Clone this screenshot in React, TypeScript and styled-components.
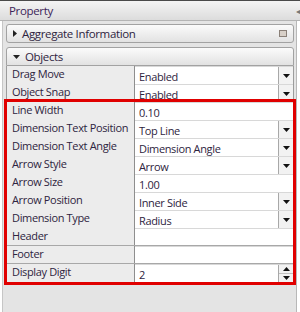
import styled, { createGlobalStyle } from "styled-components";

const GlobalStyle = createGlobalStyle`
  html, body {
    margin: 0;
    padding: 0;
    background: #ffffff;
  }
  body {
    font-family: "Open Sans", "Noto Sans", "Liberation Sans", sans-serif;
    font-size: 11px;
    letter-spacing: -0.35px;
    color: #2e2440;
  }
`;

interface Row {
  label: string;
  value: string;
  kind: "text" | "combo" | "spin";
}

const topRows: Row[] = [
  { label: "Drag Move", value: "Enabled", kind: "combo" },
  { label: "Object Snap", value: "Enabled", kind: "combo" },
];

const markedRows: Row[] = [
  { label: "Line Width", value: "0.10", kind: "text" },
  { label: "Dimension Text Position", value: "Top Line", kind: "combo" },
  { label: "Dimension Text Angle", value: "Dimension Angle", kind: "combo" },
  { label: "Arrow Style", value: "Arrow", kind: "combo" },
  { label: "Arrow Size", value: "1.00", kind: "text" },
  { label: "Arrow Position", value: "Inner Side", kind: "combo" },
  { label: "Dimension Type", value: "Radius", kind: "combo" },
  { label: "Header", value: "", kind: "text" },
  { label: "Footer", value: "", kind: "text" },
  { label: "Display Digit", value: "2", kind: "spin" },
];

const Caret = ({ up }: { up?: boolean }) => (
  <svg width="7" height="4" viewBox="0 0 7 4">
    <path d={up ? "M0 4 L3.5 0 L7 4 Z" : "M0 0 L7 0 L3.5 4 Z"} fill="#111" />
  </svg>
);

const PropRow = ({ row }: { row: Row }) => (
  <RowLine>
    <LabelCell>{row.label}</LabelCell>
    <ValueCell>
      <ValueText>{row.value}</ValueText>
      {row.kind === "combo" && (
        <DropButton>
          <Caret />
        </DropButton>
      )}
      {row.kind === "spin" && (
        <SpinButton>
          <SpinHalf>
            <Caret up />
          </SpinHalf>
          <SpinHalf>
            <Caret />
          </SpinHalf>
        </SpinButton>
      )}
    </ValueCell>
  </RowLine>
);

export default function App() {
  return (
    <>
      <GlobalStyle />
      <Window>
        <TitleBar>
          <span>Property</span>
          <Collapse>◂◂</Collapse>
        </TitleBar>
        <Body>
          <GroupHeader>
            <svg width="4" height="7" viewBox="0 0 4 7">
              <path d="M0 0 L4 3.5 L0 7 Z" fill="#222" />
            </svg>
            <GroupTitle>Aggregate Information</GroupTitle>
            <PinIcon />
          </GroupHeader>
          <Section>
            <GroupHeader $open>
              <svg width="7" height="4" viewBox="0 0 7 4">
                <path d="M0 0 L7 0 L3.5 4 Z" fill="#222" />
              </svg>
              <GroupTitle>Objects</GroupTitle>
            </GroupHeader>
            <Table>
              {topRows.map((r) => (
                <PropRow key={r.label} row={r} />
              ))}
              <Marked>
                {markedRows.map((r) => (
                  <PropRow key={r.label} row={r} />
                ))}
              </Marked>
            </Table>
          </Section>
        </Body>
      </Window>
    </>
  );
}

const Window = styled.div`
  width: 300px;
  height: 312px;
  box-sizing: border-box;
  border-top: 1px solid #4a4a4a;
  display: flex;
  flex-direction: column;
  background: #ffffff;
  overflow: hidden;
`;

const TitleBar = styled.div`
  height: 19px;
  display: flex;
  align-items: center;
  justify-content: space-between;
  padding: 0 2px 0 9px;
  background: linear-gradient(#f4f4f4, #dcdcdc);
  border-bottom: 1px solid #b4b4b4;
  color: #3c2458;
  font-size: 11.5px;
`;

const Collapse = styled.span`
  font-size: 8px;
  color: #777;
  letter-spacing: -3px;
`;

const Body = styled.div`
  flex: 1;
  margin: 0 3px 0 2px;
  padding: 3px 2px 0 3px;
  background: #e4e4e4;
  border-left: 1px solid #c6c6c6;
  border-right: 1px solid #b8b8b8;
  display: flex;
  flex-direction: column;
  gap: 4px;
`;

const Section = styled.div`
  display: flex;
  flex-direction: column;
`;

const GroupHeader = styled.div<{ $open?: boolean }>`
  height: 17px;
  display: flex;
  align-items: center;
  gap: 5px;
  padding: 0 6px;
  background: linear-gradient(#fbfbfb, #e2e2e2);
  border: 1px solid #a2a2a2;
  border-radius: ${(p) => (p.$open ? "3px 3px 0 0" : "3px")};
  color: #2e2440;
`;

const GroupTitle = styled.span`
  flex: 1;
  font-size: 11.5px;
`;

const PinIcon = styled.span`
  width: 6px;
  height: 5px;
  border: 1px solid #8a8078;
  background: #d8d0c8;
`;

const Table = styled.div`
  display: flex;
  flex-direction: column;
  border-left: 1px solid #9c9c9c;
  border-right: 1px solid #9c9c9c;
`;

const Marked = styled.div`
  display: flex;
  flex-direction: column;
  outline: 3px solid #e00000;
  outline-offset: 0px;
  margin-bottom: 2px;
`;

const RowLine = styled.div`
  height: 18px;
  display: grid;
  grid-template-columns: 128px 1fr;
  border-bottom: 1px solid #a8a8a8;
  box-sizing: border-box;
`;

const LabelCell = styled.div`
  background: #ececec;
  border-right: 1px solid #8e8e8e;
  padding: 0 0 0 5px;
  line-height: 15px;
  white-space: nowrap;
  overflow: hidden;
`;

const ValueCell = styled.div`
  background: #ffffff;
  display: flex;
  align-items: stretch;
  border-top: 1px solid #d8d8d8;
`;

const ValueText = styled.div`
  flex: 1;
  padding: 2px 0 0 4px;
  line-height: 15px;
  white-space: nowrap;
`;

const DropButton = styled.div`
  width: 14px;
  display: flex;
  align-items: center;
  justify-content: center;
  border-left: 1px solid #a8a8a8;
  background: #f2f2f2;
`;

const SpinButton = styled.div`
  width: 14px;
  display: flex;
  flex-direction: column;
  border-left: 1px solid #a8a8a8;
  background: #f2f2f2;
`;

const SpinHalf = styled.div`
  flex: 1;
  display: flex;
  align-items: center;
  justify-content: center;
  & + & {
    border-top: 1px solid #c0c0c0;
  }
`;
